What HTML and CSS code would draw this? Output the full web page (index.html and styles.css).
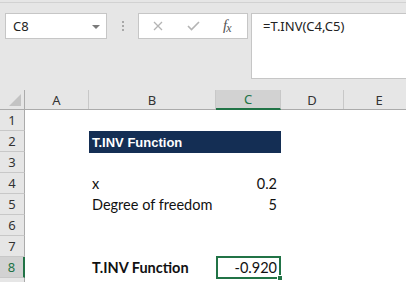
FILE: index.html
```html
<!DOCTYPE html>
<html>
<head>
<meta charset="utf-8">
<link rel="stylesheet" href="styles.css">
</head>
<body>
<div class="fbar">
  <div class="namebox"><span>C8</span><span class="caret"></span></div>
  <div class="grip"><i></i><i></i><i></i></div>
  <div class="btns">
    <svg class="ic" width="10" height="10" viewBox="0 0 10 10"><path d="M1 1L9 9M9 1L1 9" stroke="#b4b4b4" stroke-width="1.3" fill="none"/></svg>
    <svg class="ic" width="13" height="10" viewBox="0 0 13 10"><path d="M1 5L4.5 8.5L12 1" stroke="#b4b4b4" stroke-width="1.6" fill="none"/></svg>
    <span class="fx">f<span class="x">x</span></span>
  </div>
  <div class="formula">=T.INV(C4,C5)</div>
</div>
<div class="sheet">
  <div class="row hdr">
    <div class="rh corner"><span class="tri"></span></div>
    <div class="ch a">A</div><div class="ch b">B</div><div class="ch c sel">C</div><div class="ch d">D</div><div class="ch e">E</div>
  </div>
  <div class="row"><div class="rh">1</div><div class="cell a"></div><div class="cell b"></div><div class="cell c"></div></div>
  <div class="row"><div class="rh">2</div><div class="cell a"></div><div class="cell bc title">T.INV Function</div></div>
  <div class="row"><div class="rh">3</div></div>
  <div class="row"><div class="rh">4</div><div class="cell a"></div><div class="cell b">x</div><div class="cell c num">0.2</div></div>
  <div class="row"><div class="rh">5</div><div class="cell a"></div><div class="cell b">Degree of freedom</div><div class="cell c num">5</div></div>
  <div class="row"><div class="rh">6</div></div>
  <div class="row"><div class="rh">7</div></div>
  <div class="row"><div class="rh sel">8</div><div class="cell a"></div><div class="cell b bold">T.INV Function</div><div class="cell c num active">-0.920<span class="handle"></span></div></div>
  <div class="row"><div class="rh"></div></div>
</div>
</body>
</html>
```
FILE: styles.css
```css
* { box-sizing: border-box; }
html, body { margin: 0; padding: 0; }
body {
  width: 406px; height: 282px; overflow: hidden;
  background: #e6e6e6;
  font-family: "Segoe UI", "Open Sans", "Noto Sans", sans-serif;
}
.fbar {
  height: 88px;
  border-top: 1px solid #d2d2d2;
  margin-top: 2px;
  display: flex;
  align-items: flex-start;
  padding-top: 10px;
  padding-left: 5px;
}
.namebox {
  width: 102px; height: 26px;
  background: #fff;
  border: 1px solid #c6c6c6;
  display: flex; align-items: center; justify-content: space-between;
  padding: 0 6px 0 7px;
  font-size: 13px; color: #222;
  font-family: "Noto Sans", sans-serif;
}
.caret {
  width: 0; height: 0;
  border-left: 4px solid transparent; border-right: 4px solid transparent;
  border-top: 4px solid #7a7a7a;
  margin-top: 1px;
}
.grip {
  width: 31px; height: 26px;
  display: flex; flex-direction: column; align-items: center; justify-content: center; gap: 2px;
}
.grip i { display: block; width: 2px; height: 2px; background: #a8a8a8; }
.btns {
  width: 110px; height: 26px;
  background: #fff;
  border: 1px solid #c6c6c6;
  display: flex; align-items: center;
  padding-left: 14px;
}
.btns .ic:nth-child(1) { margin-right: 24px; }
.btns .ic:nth-child(2) { margin-right: 23px; }
.fx {
  font-family: "Liberation Serif", serif; font-style: italic;
  font-size: 15px; color: #555;
  margin-top: -2px;
  letter-spacing: -1px;
}
.fx .x { font-size: 12px; position: relative; top: 2px; }
.formula {
  margin-left: 3px;
  flex: 1;
  height: 66px;
  background: #fff;
  border: 1px solid #c6c6c6;
  border-right: none;
  padding: 3px 0 0 11px;
  font-size: 13px; color: #222;
  font-family: "Noto Sans", sans-serif;
}
.sheet { background: #fff; height: 194px; overflow: hidden; }
.row { display: flex; height: 21px; }
.row.hdr { height: 20px; background: #e6e6e6; border-bottom: 1px solid #ababab; }
.rh {
  width: 25px; flex: none;
  background: #e6e6e6;
  border-right: 1px solid #ababab;
  border-bottom: 1px solid #c8c8c8;
  display: flex; align-items: center; justify-content: center;
  font-size: 13px; color: #333;
  font-family: "Noto Sans", sans-serif;
}
.rh.corner { position: relative; border-bottom: none; }
.tri {
  position: absolute; right: 3px; bottom: 3px;
  width: 0; height: 0;
  border-left: 12px solid transparent; border-bottom: 12px solid #c3c3c3;
}
.rh.sel { background: #d2d2d2; border-right: 2px solid #217346; color: #217346; }
.ch {
  flex: none;
  display: flex; align-items: center; justify-content: center;
  font-size: 13px; color: #333;
  border-right: 1px solid #c8c8c8;
  font-family: "Noto Sans", sans-serif;
  height: 19px; align-self: flex-end;
}
.ch.sel { background: #d2d2d2; border-bottom: 2px solid #217346; color: #217346; height: 20px; margin-bottom: -1px; }
.a { width: 64px; flex: none; }
.b { width: 127px; flex: none; }
.c { width: 65px; flex: none; }
.d { width: 63px; flex: none; }
.e { width: 70px; flex: none; border-right: none; }
.bc { width: 192px; flex: none; }
.cell {
  font-family: "Lato", "Open Sans", sans-serif;
  font-size: 14.5px; color: #111;
  padding: 0 3px;
  display: flex; align-items: center;
  white-space: nowrap;
}
.title {
  background: #142e54; color: #fff; font-weight: bold; height: 22px;
  font-family: "Liberation Sans", Arial, sans-serif; font-size: 13px;
}
.bold { font-weight: bold; }
.num { justify-content: flex-end; padding-right: 4px; }
.active { border: 2px solid #217346; position: relative; height: 23px; margin-top: -1px; padding-right: 2px; }
.handle {
  position: absolute; right: -4px; bottom: -4px;
  width: 6px; height: 6px; background: #217346; border: 1px solid #fff;
}
```
